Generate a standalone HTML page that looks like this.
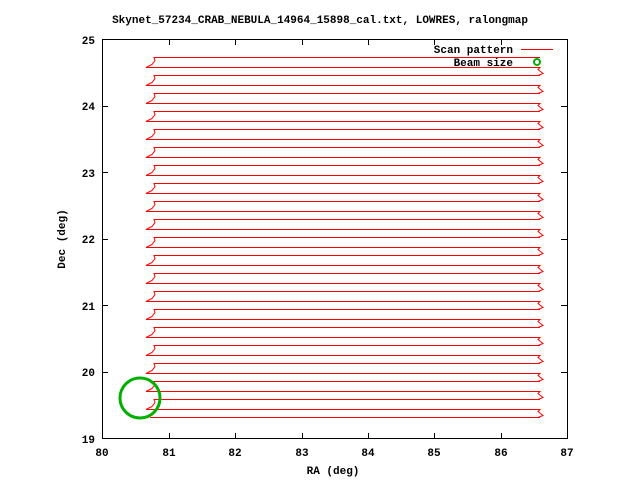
<!DOCTYPE html>
<html><head><style>
html,body{margin:0;padding:0;background:#fff;width:640px;height:480px;overflow:hidden}
svg text{font-family:"Liberation Mono",monospace;font-size:11px;font-weight:bold;fill:#000}
</style></head><body>
<svg width="640" height="480" xmlns="http://www.w3.org/2000/svg">
<text x="320" y="23" text-anchor="middle">Skynet_57234_CRAB_NEBULA_14964_15898_cal.txt, LOWRES, ralongmap</text>
<g stroke="#000" stroke-width="1" fill="none" shape-rendering="crispEdges">
<rect x="102.5" y="39.5" width="465" height="399"/>
<path d="M169.5,439V433M169.5,39V45M235.5,439V433M235.5,39V45M302.5,439V433M302.5,39V45M368.5,439V433M368.5,39V45M434.5,439V433M434.5,39V45M501.5,439V433M501.5,39V45
M102,372.5H108M567,372.5H561M102,305.5H108M567,305.5H561M102,239.5H108M567,239.5H561M102,172.5H108M567,172.5H561M102,106.5H108M567,106.5H561"/>
</g>
<g text-anchor="end">
<text x="95" y="443">19</text><text x="95" y="376">20</text><text x="95" y="310">21</text><text x="95" y="243">22</text><text x="95" y="177">23</text><text x="95" y="110">24</text><text x="95" y="44">25</text>
</g>
<g text-anchor="middle">
<text x="102" y="456">80</text><text x="169" y="456">81</text><text x="235" y="456">82</text><text x="302" y="456">83</text><text x="368" y="456">84</text><text x="434" y="456">85</text><text x="501" y="456">86</text><text x="567" y="456">87</text>
<text x="333" y="474">RA (deg)</text>
</g>
<text x="0" y="0" text-anchor="middle" transform="translate(65,239) rotate(-90)">Dec (deg)</text>
<text x="513" y="53" text-anchor="end">Scan pattern</text>
<text x="513" y="66" text-anchor="end">Beam size</text>
<rect x="521" y="49" width="32" height="1" fill="#ff0000"/>
<g fill="#ff0000">
<rect x="154" y="57" width="386" height="1"/><rect x="146" y="67" width="394" height="1"/>
<rect x="154" y="75" width="386" height="1"/><rect x="146" y="85" width="394" height="1"/>
<rect x="154" y="93" width="386" height="1"/><rect x="146" y="103" width="394" height="1"/>
<rect x="154" y="111" width="386" height="1"/><rect x="146" y="121" width="394" height="1"/>
<rect x="154" y="129" width="386" height="1"/><rect x="146" y="139" width="394" height="1"/>
<rect x="154" y="147" width="386" height="1"/><rect x="146" y="157" width="394" height="1"/>
<rect x="154" y="165" width="386" height="1"/><rect x="146" y="175" width="394" height="1"/>
<rect x="154" y="183" width="386" height="1"/><rect x="146" y="193" width="394" height="1"/>
<rect x="154" y="201" width="386" height="1"/><rect x="146" y="211" width="394" height="1"/>
<rect x="154" y="219" width="386" height="1"/><rect x="146" y="229" width="394" height="1"/>
<rect x="154" y="237" width="386" height="1"/><rect x="146" y="247" width="394" height="1"/>
<rect x="154" y="255" width="386" height="1"/><rect x="146" y="265" width="394" height="1"/>
<rect x="154" y="273" width="386" height="1"/><rect x="146" y="283" width="394" height="1"/>
<rect x="154" y="291" width="386" height="1"/><rect x="146" y="301" width="394" height="1"/>
<rect x="154" y="309" width="386" height="1"/><rect x="146" y="319" width="394" height="1"/>
<rect x="154" y="327" width="386" height="1"/><rect x="146" y="337" width="394" height="1"/>
<rect x="154" y="345" width="386" height="1"/><rect x="146" y="355" width="394" height="1"/>
<rect x="154" y="363" width="386" height="1"/><rect x="146" y="373" width="394" height="1"/>
<rect x="154" y="381" width="386" height="1"/><rect x="146" y="391" width="394" height="1"/>
<rect x="154" y="399" width="386" height="1"/><rect x="146" y="409" width="394" height="1"/>
<rect x="150" y="417" width="390" height="1"/>
</g>
<path fill="none" stroke="#ff0000" stroke-width="1" d="M540,57.5 H154 l1,3 l-3,4 l-6,3 H540 l-2,2 l5,4 l-5,2 H154 l1,3 l-3,4 l-6,3 H540 l-2,2 l5,4 l-5,2 H154 l1,3 l-3,4 l-6,3 H540 l-2,2 l5,4 l-5,2 H154 l1,3 l-3,4 l-6,3 H540 l-2,2 l5,4 l-5,2 H154 l1,3 l-3,4 l-6,3 H540 l-2,2 l5,4 l-5,2 H154 l1,3 l-3,4 l-6,3 H540 l-2,2 l5,4 l-5,2 H154 l1,3 l-3,4 l-6,3 H540 l-2,2 l5,4 l-5,2 H154 l1,3 l-3,4 l-6,3 H540 l-2,2 l5,4 l-5,2 H154 l1,3 l-3,4 l-6,3 H540 l-2,2 l5,4 l-5,2 H154 l1,3 l-3,4 l-6,3 H540 l-2,2 l5,4 l-5,2 H154 l1,3 l-3,4 l-6,3 H540 l-2,2 l5,4 l-5,2 H154 l1,3 l-3,4 l-6,3 H540 l-2,2 l5,4 l-5,2 H154 l1,3 l-3,4 l-6,3 H540 l-2,2 l5,4 l-5,2 H154 l1,3 l-3,4 l-6,3 H540 l-2,2 l5,4 l-5,2 H154 l1,3 l-3,4 l-6,3 H540 l-2,2 l5,4 l-5,2 H154 l1,3 l-3,4 l-6,3 H540 l-2,2 l5,4 l-5,2 H154 l1,3 l-3,4 l-6,3 H540 l-2,2 l5,4 l-5,2 H154 l1,3 l-3,4 l-6,3 H540 l-2,2 l5,4 l-5,2 H154 l1,3 l-3,4 l-6,3 H540 l-2,2 l5,4 l-5,2 H154 l1,3 l-3,4 l-6,3 H540 l-2,2 l5,4 l-5,2 H150"/>
<circle cx="140" cy="398" r="20" fill="none" stroke="#00b000" stroke-width="3"/>
<circle cx="537" cy="62" r="3" fill="none" stroke="#00b000" stroke-width="2"/>
</svg>
</body></html>
